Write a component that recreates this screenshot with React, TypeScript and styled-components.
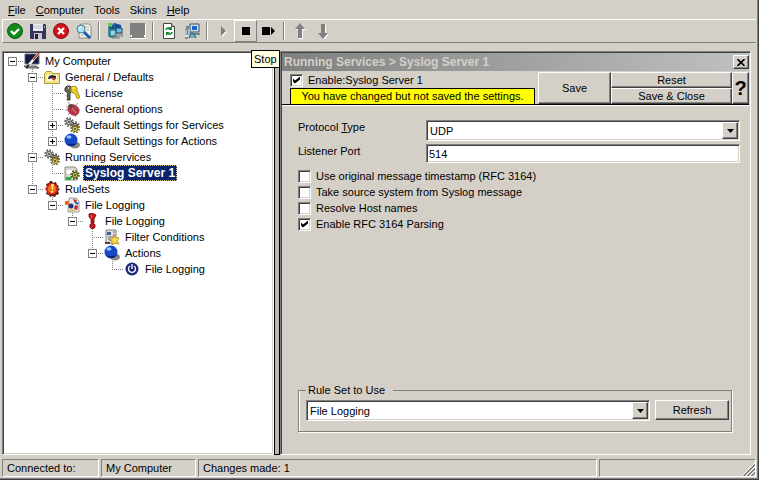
import React from "react";
import styled, { createGlobalStyle, css } from "styled-components";

const face = "#d4d0c8";
const shadow = "#808080";
const dark = "#404040";

const GlobalStyle = createGlobalStyle`
  *, *::before, *::after { box-sizing: border-box; }
  body { margin: 0; background: ${face}; }
  body, button, input, select {
    font-family: "Liberation Sans", Arial, sans-serif;
    font-size: 11px;
    line-height: 16px;
    color: #000;
  }
`;

const sunken = css`
  border: 1px solid;
  border-color: ${shadow} #fff #fff ${shadow};
  box-shadow: inset 1px 1px ${dark}, inset -1px -1px ${face};
`;

const raised = css`
  border: 1px solid;
  border-color: #fff ${dark} ${dark} #fff;
  box-shadow: inset -1px -1px ${shadow};
  background: ${face};
`;

const Window = styled.div`
  display: flex;
  flex-direction: column;
  min-height: 100vh;
  padding-left: 2px;
  background: ${face};
  border: solid ${dark};
  border-width: 0 1px 1px 0;
  box-shadow: inset -1px -1px ${shadow};
`;

const MenuBar = styled.nav`
  display: flex;
  height: 19px;
  padding-left: 1px;
`;

const MenuItem = styled.button`
  padding: 0 5px;
  border: 0;
  background: none;
  line-height: 18px;
`;

const Toolbar = styled.div`
  display: flex;
  height: 24px;
  margin-right: 2px;
  border: solid #fff;
  border-width: 1px 0 0 1px;
  border-bottom: 1px solid ${shadow};
`;

const ToolSlot = styled.div`
  position: relative;
  display: flex;
`;

const ToolButton = styled.button<{ $active?: boolean }>`
  display: grid;
  place-items: center;
  width: 23px;
  height: 22px;
  padding: 0;
  background: none;
  border: 1px solid;
  border-color: ${(p) => (p.$active ? `#fff ${shadow} ${shadow} #fff` : "transparent")};
`;

const Separator = styled.span`
  width: 2px;
  margin: 2px 3px;
  border-left: 1px solid ${shadow};
  border-right: 1px solid #fff;
`;

const Tooltip = styled.span`
  position: absolute;
  z-index: 1;
  top: 30px;
  left: 17px;
  padding: 0 2px;
  background: #ffffe1;
  border: 1px solid #000;
`;

const Main = styled.main`
  display: flex;
  flex: 1;
  padding: 8px 7px 0 0;
`;

const TreePane = styled.div`
  ${sunken}
  flex: 0 0 272px;
  padding: 1px;
  background: #fff;
`;

const Splitter = styled.div`
  flex: 0 0 6px;
  background: #b8b8b8;
  border: 1px solid #000;
`;

const TreeList = styled.ul`
  margin: 0;
  padding: 0;
  list-style: none;
`;

const TreeRow = styled.li`
  display: flex;
  height: 16px;
`;

const vDots = `repeating-linear-gradient(${shadow} 0 1px, transparent 1px 2px)`;
const hDots = `repeating-linear-gradient(90deg, ${shadow} 0 1px, transparent 1px 2px)`;

const guideLines: Record<string, string> = {
  " ": "none",
  "-": `${hDots} 8px 8px / 12px 1px no-repeat`,
  "|": `${vDots} 8px 0 / 1px 16px no-repeat`,
  T: `${vDots} 8px 0 / 1px 16px no-repeat, ${hDots} 8px 8px / 12px 1px no-repeat`,
  L: `${vDots} 8px 0 / 1px 9px no-repeat, ${hDots} 8px 8px / 12px 1px no-repeat`,
};

const Guide = styled.span<{ $kind: string }>`
  display: flex;
  flex: 0 0 20px;
  padding: 4px 0 0 4px;
  background: ${(p) => guideLines[p.$kind]};
`;

const Expander = styled.button<{ $closed?: boolean }>`
  width: 9px;
  height: 9px;
  padding: 0;
  border: 1px solid ${shadow};
  background:
    linear-gradient(#000, #000) 1px 3px / 5px 1px no-repeat,
    ${(p) => (p.$closed ? "linear-gradient(#000, #000) 3px 1px / 1px 5px no-repeat," : "")}
    #fff;
`;

const TreeLabel = styled.span<{ $selected?: boolean }>`
  margin-left: 3px;
  padding: 0 2px;
  white-space: nowrap;
  ${(p) =>
    p.$selected &&
    css`
      background: #0a246a;
      color: #fff;
      font-weight: bold;
      font-size: 12px;
      outline: 1px dotted #e0c878;
      outline-offset: -1px;
    `}
`;

const Panel = styled.section`
  display: flex;
  flex: 1;
  flex-direction: column;
  min-width: 0;
  ${sunken}
  padding: 1px;
`;

const TitleBar = styled.header`
  display: flex;
  align-items: center;
  justify-content: space-between;
  height: 18px;
  padding: 0 0 0 2px;
  background: linear-gradient(90deg, #808080, #c0c0c0);
`;

const Title = styled.h1`
  margin: 0;
  font-size: 12px;
  line-height: 18px;
  color: ${face};
`;

const Button = styled.button`
  ${raised}
  display: grid;
  place-items: center;
  padding: 0;
  line-height: 14px;
`;

const CloseButton = styled(Button)`
  width: 16px;
  height: 14px;
`;

const HelpButton = styled(Button)`
  grid-row: 1 / 3;
  grid-column: 4;
  font-size: 20px;
  font-weight: bold;
`;

const SaveButton = styled(Button)`
  grid-row: 1 / 3;
`;

const PanelHeader = styled.div`
  display: grid;
  grid-template-columns: 1fr 73px 121px 17px;
  grid-template-rows: 16px 16px;
  padding-top: 1px;
  border-bottom: 1px solid #000;
  box-shadow: 0 1px #fff;
`;

const HeaderInfo = styled.div`
  display: flex;
  flex-direction: column;
  justify-content: space-between;
  grid-row: 1 / 3;
  padding: 0 3px 0 8px;
`;

const Notice = styled.div`
  height: 16px;
  overflow: hidden;
  background: #ff0;
  border: 1px solid #000;
  border-bottom: 0;
  text-align: center;
  line-height: 15px;
`;

const CheckLabel = styled.label`
  display: flex;
  align-items: center;
  gap: 5px;
  height: 16px;
`;

const CheckBox = styled.input`
  ${sunken}
  display: grid;
  place-items: center;
  appearance: none;
  width: 13px;
  height: 13px;
  margin: 0;
  background: #fff;

  &:checked::before {
    content: "";
    width: 7px;
    height: 7px;
    background: #000;
    clip-path: polygon(0 29%, 29% 57%, 100% 0, 100% 43%, 29% 100%, 0 71%);
  }
`;

const Form = styled.form`
  display: flex;
  flex: 1;
  flex-direction: column;
  padding: 15px 9px 21px 16px;
`;

const Fields = styled.div`
  display: grid;
  grid-template-columns: 128px 1fr;
  row-gap: 3px;
`;

const FieldLabel = styled.label`
  line-height: 14px;
`;

const SelectBox = styled.div`
  position: relative;
  display: flex;
  flex: 1;
`;

const Select = styled.select`
  ${sunken}
  appearance: none;
  flex: 1;
  height: 21px;
  padding: 0 20px 0 3px;
  border-radius: 0;
  background: #fff;
`;

const SelectArrow = styled.span`
  ${raised}
  position: absolute;
  top: 2px;
  right: 2px;
  display: grid;
  place-items: center;
  width: 16px;
  height: 17px;
  pointer-events: none;
`;

const TextInput = styled.input`
  ${sunken}
  width: 100%;
  height: 19px;
  padding: 0 2px;
  background: #fff;
`;

const Checks = styled.div`
  display: flex;
  flex-direction: column;
  margin-top: 5px;
`;

const RuleGroup = styled.fieldset`
  display: flex;
  gap: 5px;
  min-width: 0;
  margin: auto 8px 0 0;
  padding: 2px 2px 10px 7px;
  border: 1px solid ${shadow};
  box-shadow: 1px 1px #fff, inset 1px 0 #fff;

  legend {
    padding: 0 8px 0 2px;
  }
`;

const RefreshButton = styled(Button)`
  width: 74px;
  height: 20px;
`;

const StatusBar = styled.footer`
  display: grid;
  grid-template-columns: 97px 95px 1fr 157px;
  gap: 2px;
  padding: 4px 2px 2px 0;
`;

const StatusCell = styled.div`
  display: flex;
  height: 18px;
  padding-left: 4px;
  line-height: 16px;
  border: 1px solid;
  border-color: ${shadow} #fff #fff ${shadow};

  svg {
    margin: auto 0 0 auto;
  }
`;

/* ---------- icons ---------- */

const Icon = ({ children }: { children: React.ReactNode }) => (
  <svg width="16" height="16" viewBox="0 0 16 16" aria-hidden="true">
    {children}
  </svg>
);

const AcceptIcon = () => (
  <Icon>
    <circle cx="8" cy="8" r="7.5" fill="#138a1c" stroke="#0b5a12" />
    <path d="M4 8l3 3 5-5" fill="none" stroke="#fff" strokeWidth="2.2" />
  </Icon>
);
const DiskIcon = () => (
  <Icon>
    <path d="M0 1h15l1 1v14H1l-1-1z" fill="#37345c" />
    <path d="M3 1h10v7H3z" fill="#eceef5" />
    <path d="M3 3h10M3 5h10" stroke="#bfc3d4" />
    <path d="M4 10h8v6H4z" fill="#c7c7cf" />
    <path d="M5 11h3v5H5z" fill="#25243c" />
    <path d="M14 3h1v2h-1z" fill="#aaa" />
  </Icon>
);
const CancelIcon = () => (
  <Icon>
    <circle cx="8" cy="8" r="7.5" fill="#d0141c" stroke="#8d0a10" />
    <path d="M5 5l6 6M11 5l-6 6" stroke="#fff" strokeWidth="2.4" />
  </Icon>
);
const SearchDocIcon = () => (
  <Icon>
    <path d="M5 1h8l2 2v12H3V3z" fill="#f4f4ee" stroke="#8b8b83" />
    <path d="M9 4h4M10 7h3M5 12h3" stroke="#aaa" />
    <path d="M8 9l6 6" stroke="#1c5cb0" strokeWidth="3" />
    <circle cx="5" cy="6" r="4" fill="#a8e4f4" stroke="#49788a" />
    <path d="M3 6l2-2" stroke="#fff" />
  </Icon>
);
const ComputersIcon = () => (
  <Icon>
    <path d="M1 3l6-3 3 1v13l-7 1-2-2z" fill="#3e9490" />
    <path d="M2 4l5-2v4H3zM7 0l7 2v5H8z" fill="#154a9a" />
    <path d="M3 7h6v6H3z" fill="#8bd4e4" stroke="#24547a" />
    <path d="M9 5h6v5H9z" fill="#5cc0e8" stroke="#2c3c5c" />
    <path d="M8 11h8v2H8zM5 15h8" fill="#dcd8c8" stroke="#6d746f" />
    <path d="M1 1h3v3" fill="none" stroke="#72c34c" strokeWidth="2" />
  </Icon>
);
const DisabledPcIcon = () => (
  <Icon>
    <path d="M1 1h15v15H1z" fill="#fff" />
    <path d="M0 0h15v12h-1v2h1v1H0v-1h2v-2H0z" fill="#808080" />
  </Icon>
);
const RefreshDocIcon = () => (
  <Icon>
    <path d="M2.500.5h8l3 3v12h-11z" fill="#fff" stroke="#444" />
    <path d="M10.500.5v3h3" fill="#ddd" stroke="#444" />
    <path d="M5 7c0-2 3-3 5-1M11 9c0 2-3 3-5 1" fill="none" stroke="#138a2c" strokeWidth="1.600" />
    <path d="M11 3v4H7zM5 13V9h4z" fill="#138a2c" />
  </Icon>
);
const NetworkIcon = () => (
  <Icon>
    <path d="M6 1h9v8H6z" fill="#d8dce4" stroke="#34506c" />
    <path d="M8 3h5v4H8z" fill="#1c64c8" />
    <path d="M7 10h9v2H8zM2 3h3v3h2v6H1V6h1z" fill="#718897" />
    <path d="M2 7v7M5 6v8" stroke="#e7f4f5" />
    <path d="M5 15l2-5 3 1 2 4M1 15h3" fill="#68b5bd" stroke="#23576a" />
  </Icon>
);
const PlayIcon = () => (
  <Icon>
    <path d="M7 4l5 5-5 5z" fill="#fff" />
    <path d="M6 3l5 5-5 5z" fill="#808080" />
  </Icon>
);
const StopIcon = () => (
  <Icon>
    <path d="M4 4h8v8H4z" />
  </Icon>
);
const RestartIcon = () => (
  <Icon>
    <path d="M1 4h8v8H1zM10 4l4 4-4 4z" />
  </Icon>
);
const upArrow = "M8 0l5 6h-3v9H6V6H3z";
const downArrow = "M8 16l5-6h-3V1H6v9H3z";
const ArrowIcon = ({ d }: { d: string }) => (
  <Icon>
    <path d={d} fill="#fff" transform="translate(1 1)" />
    <path d={d} fill="#808080" />
  </Icon>
);

const RootIcon = () => (
  <Icon>
    <path d="M1 1h14v10H1z" fill="#15183c" stroke="#6a6a78" />
    <path d="M0 13h12l3 2H2z" fill="#a8a8a8" stroke="#555" />
    <path d="M15 0L4 13" stroke="#fff" strokeWidth="2.500" />
    <path d="M15 0L9 7" stroke="#b82418" strokeWidth="1.200" />
    <path d="M3 12l3-1-2 4H2z" fill="#202020" />
  </Icon>
);
const FolderIcon = () => (
  <Icon>
    <path d="M.5 4.500l2-2h5l1 2h7v10H.5z" fill="#f2e678" stroke="#a8984c" />
    <path d="M3 6h10v6H3z" fill="#fffbe0" />
    <path d="M4 10l1-3 3-1 4 1v3l-2-1-1 1-2-1-1 1z" fill="#26263a" />
    <path d="M8 9l3 2" stroke="#c83028" strokeWidth="2" />
  </Icon>
);
const KeysIcon = () => (
  <Icon>
    <path d="M3 1h3l2 2v3L6 8v7H3l1-2-1-2 1-3-3-2V3z" fill="#68685c" stroke="#3a3a34" />
    <path d="M7 2l4-1 2 2v3l3 6-2 2-2-2v-2l-2-2-3-1z" fill="#e8cf1c" stroke="#8c7810" strokeWidth=".8" />
    <path d="M4 3h1M9 3h1" stroke="#fff" strokeWidth="1.500" />
  </Icon>
);
const BugIcon = () => (
  <Icon>
    <path d="M2 5l4 3M4 1l3 4M1 9h5M4 14l3-3M12 4l2-2M13 9h3M11 13l1 3" stroke="#a09494" />
    <ellipse cx="9.500" cy="9" rx="6" ry="5" transform="rotate(40 9.5 9)" fill="#b73843" stroke="#8c3440" strokeWidth=".6" />
    <path d="M4 4l4-1 1 3-3 2z" fill="#55454b" />
    <path d="M8 7l4 5" stroke="#e88888" />
  </Icon>
);
const Gear = ({ x, y, color, edge }: { x: number; y: number; color: string; edge: string }) => (
  <g transform={`translate(${x} ${y})`}>
    <circle r="3.600" fill="none" stroke={edge} strokeWidth="2.400" strokeDasharray="1.600 1.200" />
    <circle r="2.600" fill={color} stroke={edge} />
    <circle r="1.100" fill="#444" />
  </g>
);
const GearsIcon = () => (
  <Icon>
    <Gear x={5} y={5} color="#c8c8c0" edge="#65655f" />
    <Gear x={11} y={9} color="#aaa794" edge="#54534b" />
    <Gear x={11} y={12} color="#e5d45b" edge="#7b732c" />
  </Icon>
);
const BallIcon = () => (
  <Icon>
    <ellipse cx="11" cy="12" rx="5" ry="3.500" fill="#888" />
    <circle cx="7" cy="7" r="6.500" fill="#1648c8" />
    <path d="M2 10a6.500 6.500 0 0 0 11 0c-3 1-8 2-11 0z" fill="#0a2478" />
    <ellipse cx="5" cy="4" rx="2.500" ry="1.800" fill="#86c8ff" />
  </Icon>
);
const ServiceIcon = () => (
  <Icon>
    <path d="M1 2h10l2 2v11H1z" fill="#d6d6ca" stroke="#929288" />
    <path d="M3 5h5v4H3z" fill="#fff" />
    <path d="M2 12h5v3H2z" fill="#35a844" />
    <Gear x={11} y={10} color="#d0cf45" edge="#53591d" />
  </Icon>
);
const AlertIcon = () => (
  <Icon>
    <path d="M8 0l1 2 3-1 1 3 2 1-1 2 2 1-2 2 1 3-3 1-1 2-3-1-2 1-1-2-3-1 1-3-2-2 2-2-1-3 3-1 1-2z" fill="#4c1814" />
    <circle cx="8" cy="8" r="6" fill="#dc2416" />
    <circle cx="8" cy="8" r="4" fill="#ef7122" />
    <path d="M7 3h3L9 9H8zM7 10h2v2H7z" fill="#ffe860" />
  </Icon>
);
const RuleSetIcon = () => (
  <Icon>
    <path d="M5 1h7l3 3v11H4z" fill="#e6e6e6" stroke="#999" />
    <circle cx="3" cy="6" r="2.300" fill="#e86a18" />
    <circle cx="7" cy="9" r="2.500" fill="#18348c" />
    <path d="M9 2l4 1-2 3zM11 8l3 1-1 4-3-1z" fill="#c92024" />
    <path d="M11 5l3 2" stroke="#2450b0" strokeWidth="2" />
    <path d="M6 12h4v2H6z" fill="#e8c140" />
  </Icon>
);
const ExclaimIcon = () => (
  <Icon>
    <path d="M5 1l3-1 4 2-2 4v4H7V6L5 4z" fill="#c81018" stroke="#690c10" strokeWidth=".8" />
    <circle cx="8.500" cy="13" r="2.700" fill="#d01820" stroke="#690c10" strokeWidth=".8" />
    <path d="M7 2l1 3" stroke="#ff8c80" />
  </Icon>
);
const FilterIcon = () => (
  <Icon>
    <path d="M2 1h10v13H2z" fill="#ddd" stroke="#848484" />
    <path d="M3 3h4v3H3z" fill="#40628c" />
    <path d="M9 3h2M4 8h5M4 10h3" stroke="#777" />
    <path d="M10 5l1 3 4 1-2 3 2 3-4-1-3 2v-4l-3-1 4-2z" fill="#f7da46" stroke="#a8841c" strokeWidth=".8" />
    <path d="M1 13h5v2H1z" fill="#444" />
  </Icon>
);
const PowerIcon = () => (
  <Icon>
    <circle cx="8" cy="8" r="6.500" fill="#202878" />
    <path d="M6 5a3.500 3.500 0 1 0 4 0M8 3v5" fill="none" stroke="#fff" strokeWidth="1.300" />
  </Icon>
);

const DropArrow = () => (
  <svg width="7" height="4" viewBox="0 0 7 4" aria-hidden="true">
    <path d="M0 0h7L3.500 4z" />
  </svg>
);
const CloseGlyph = () => (
  <svg width="8" height="7" viewBox="0 0 8 7" aria-hidden="true">
    <path d="M.5 0l7 7M7.500 0l-7 7" stroke="#000" strokeWidth="1.600" />
  </svg>
);
const Grip = () => (
  <svg width="13" height="13" viewBox="0 0 13 13" aria-hidden="true">
    <path d="M0 13L13 0M4 13l9-9M8 13l5-5" stroke="#fff" />
    <path d="M1 13L13 1M2 13L13 2M5 13l8-8M6 13l7-7M9 13l4-4M10 13l3-3" stroke="#808080" />
  </svg>
);

/* ---------- data ---------- */

type Tool = { name: string; icon: React.ReactNode; active?: boolean } | null;

const tools: Tool[] = [
  { name: "Apply", icon: <AcceptIcon /> },
  { name: "Save", icon: <DiskIcon /> },
  { name: "Cancel", icon: <CancelIcon /> },
  { name: "Find", icon: <SearchDocIcon /> },
  null,
  { name: "Computers", icon: <ComputersIcon /> },
  { name: "Disconnect", icon: <DisabledPcIcon /> },
  null,
  { name: "Reload", icon: <RefreshDocIcon /> },
  { name: "Network", icon: <NetworkIcon /> },
  null,
  { name: "Start", icon: <PlayIcon /> },
  { name: "Stop", icon: <StopIcon />, active: true },
  { name: "Restart", icon: <RestartIcon /> },
  null,
  { name: "Move up", icon: <ArrowIcon d={upArrow} /> },
  { name: "Move down", icon: <ArrowIcon d={downArrow} /> },
];

type Node = {
  guides: string;
  label: string;
  icon: React.ReactNode;
  expander?: "open" | "closed";
  selected?: boolean;
};

const nodes: Node[] = [
  { guides: "-", label: "My Computer", icon: <RootIcon />, expander: "open" },
  { guides: " T", label: "General / Defaults", icon: <FolderIcon />, expander: "open" },
  { guides: " |T", label: "License", icon: <KeysIcon /> },
  { guides: " |T", label: "General options", icon: <BugIcon /> },
  { guides: " |T", label: "Default Settings for Services", icon: <GearsIcon />, expander: "closed" },
  { guides: " |L", label: "Default Settings for Actions", icon: <BallIcon />, expander: "closed" },
  { guides: " T", label: "Running Services", icon: <GearsIcon />, expander: "open" },
  { guides: " |L", label: "Syslog Server 1", icon: <ServiceIcon />, selected: true },
  { guides: " L", label: "RuleSets", icon: <AlertIcon />, expander: "open" },
  { guides: "  L", label: "File Logging", icon: <RuleSetIcon />, expander: "open" },
  { guides: "   L", label: "File Logging", icon: <ExclaimIcon />, expander: "open" },
  { guides: "    T", label: "Filter Conditions", icon: <FilterIcon /> },
  { guides: "    L", label: "Actions", icon: <BallIcon />, expander: "open" },
  { guides: "     L", label: "File Logging", icon: <PowerIcon /> },
];

const options = [
  { label: "Use original message timestamp (RFC 3164)", checked: false },
  { label: "Take source system from Syslog message", checked: false },
  { label: "Resolve Host names", checked: false },
  { label: "Enable RFC 3164 Parsing", checked: true },
];

export default function App() {
  return (
    <>
      <GlobalStyle />
      <Window>
        <MenuBar>
          <MenuItem><u>F</u>ile</MenuItem>
          <MenuItem><u>C</u>omputer</MenuItem>
          <MenuItem>Tools</MenuItem>
          <MenuItem>Skins</MenuItem>
          <MenuItem><u>H</u>elp</MenuItem>
        </MenuBar>
        <Toolbar role="toolbar">
          {tools.map((tool, i) =>
            tool ? (
              <ToolSlot key={i}>
                <ToolButton aria-label={tool.name} $active={tool.active}>
                  {tool.icon}
                </ToolButton>
                {tool.active && <Tooltip role="tooltip">{tool.name}</Tooltip>}
              </ToolSlot>
            ) : (
              <Separator key={i} />
            )
          )}
        </Toolbar>
        <Main>
          <TreePane>
            <TreeList>
              {nodes.map((node, i) => (
                <TreeRow key={i}>
                  {node.guides.split("").map((kind, g) => (
                    <Guide key={g} $kind={kind}>
                      {g === node.guides.length - 1 && node.expander && (
                        <Expander
                          aria-label={`Toggle ${node.label}`}
                          aria-expanded={node.expander === "open"}
                          $closed={node.expander === "closed"}
                        />
                      )}
                    </Guide>
                  ))}
                  {node.icon}
                  <TreeLabel $selected={node.selected}>{node.label}</TreeLabel>
                </TreeRow>
              ))}
            </TreeList>
          </TreePane>
          <Splitter />
          <Panel>
            <TitleBar>
              <Title>Running Services &gt; Syslog Server 1</Title>
              <CloseButton aria-label="Close"><CloseGlyph /></CloseButton>
            </TitleBar>
            <PanelHeader>
              <HeaderInfo>
                <CheckLabel>
                  <CheckBox type="checkbox" defaultChecked />
                  Enable:Syslog Server 1
                </CheckLabel>
                <Notice>You have changed but not saved the settings.</Notice>
              </HeaderInfo>
              <SaveButton>Save</SaveButton>
              <Button>Reset</Button>
              <Button>Save &amp; Close</Button>
              <HelpButton>?</HelpButton>
            </PanelHeader>
            <Form onSubmit={(e) => e.preventDefault()}>
              <Fields>
                <FieldLabel htmlFor="protocol">Protocol <u>T</u>ype</FieldLabel>
                <SelectBox>
                  <Select id="protocol"><option>UDP</option></Select>
                  <SelectArrow><DropArrow /></SelectArrow>
                </SelectBox>
                <FieldLabel htmlFor="port">Listener Port</FieldLabel>
                <TextInput id="port" defaultValue="514" />
              </Fields>
              <Checks>
                {options.map((o) => (
                  <CheckLabel key={o.label}>
                    <CheckBox type="checkbox" defaultChecked={o.checked} />
                    {o.label}
                  </CheckLabel>
                ))}
              </Checks>
              <RuleGroup>
                <legend>Rule Set to Use</legend>
                <SelectBox>
                  <Select aria-label="Rule Set to Use"><option>File Logging</option></Select>
                  <SelectArrow><DropArrow /></SelectArrow>
                </SelectBox>
                <RefreshButton>Refresh</RefreshButton>
              </RuleGroup>
            </Form>
          </Panel>
        </Main>
        <StatusBar>
          <StatusCell>Connected to:</StatusCell>
          <StatusCell>My Computer</StatusCell>
          <StatusCell>Changes made: 1</StatusCell>
          <StatusCell><Grip /></StatusCell>
        </StatusBar>
      </Window>
    </>
  );
}
